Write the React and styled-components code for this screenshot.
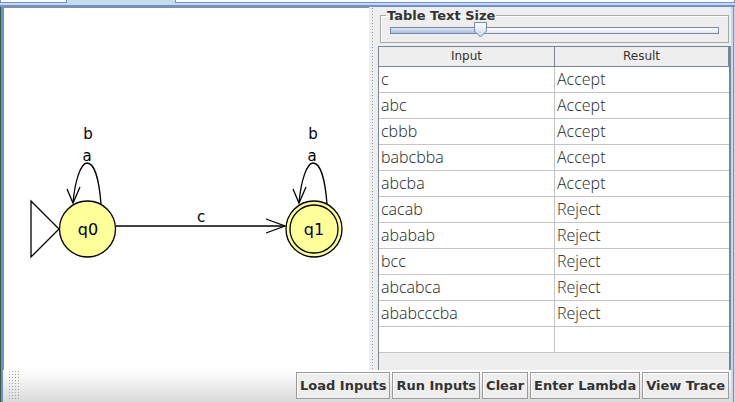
import React from "react";
import styled, { createGlobalStyle } from "styled-components";

const GlobalStyle = createGlobalStyle`
  html, body {
    margin: 0;
    padding: 0;
    background: #c6dbef;
  }
  body {
    font-family: "DejaVu Sans", sans-serif;
  }
`;

const Frame = styled.div`
  width: 735px;
  height: 402px;
  display: flex;
  flex-direction: column;
  overflow: hidden;
  background: #c6dbef;
`;

const TabStrip = styled.div`
  display: flex;
  border-bottom: 2px solid #7190cf;
  box-sizing: border-box;
  height: 7px;
`;

const Tab = styled.div`
  width: ${(p) => p.w}px;
  flex: ${(p) => (p.grow ? 1 : "none")};
  height: 3px;
  box-sizing: border-box;
  background: ${(p) => (p.active ? "#c6dbef" : "#ffffff")};
  border: ${(p) => (p.active ? "none" : "1px solid #7190cf")};
  border-top: none;
`;

const Body = styled.div`
  flex: 1;
  display: flex;
  min-height: 0;
`;

const LeftEdge = styled.div`
  width: 3px;
  background: linear-gradient(to right, #3a5a48 0 1px, #6fa060 1px 2px, #7190cf 2px 3px);
`;

const Main = styled.div`
  flex: 1;
  display: flex;
  flex-direction: column;
  background: #eeeeee;
`;

const RightEdge = styled.div`
  width: 4px;
  background: linear-gradient(to right, #c6dbef 0 2px, #7190cf 2px 3px, #c6dbef 3px);
`;

const Split = styled.div`
  height: 363px;
  display: flex;
`;

const Canvas = styled.div`
  width: 366px;
  background: #ffffff;
  border-left: 1px solid #8a8f96;
  border-top: 1px solid #8a8f96;
  box-sizing: border-box;
`;

const Divider = styled.div`
  width: 8px;
  background-color: #eeeeee;
  background-image: radial-gradient(circle, #8e9aa8 0.6px, transparent 0.9px);
  background-size: 3px 3px;
  background-position: 2px 3px;
  background-clip: content-box;
  padding: 0 2px;
  box-sizing: border-box;
`;

const Side = styled.div`
  flex: 1;
  display: flex;
  flex-direction: column;
  padding: 2px 0 0 1px;
  background: #eeeeee;
`;

const SizeBox = styled.fieldset`
  margin: 0 2px 3px 2px;
  padding: 4px 9px 6px 9px;
  border: 1px solid #a8a8a8;
  box-shadow: inset 1px 1px 0 #ffffff;
  height: 34px;
  box-sizing: border-box;
  legend {
    font: bold 13px "DejaVu Sans", sans-serif;
    color: #333333;
    padding: 0 1px;
    margin-left: -4px;
    line-height: 13px;
  }
`;

const Track = styled.div`
  position: relative;
  height: 5px;
  margin-top: 1px;
  border: 1px solid #7b8aa3;
  background: linear-gradient(#ffffff, #dfe5ee);
`;

const TrackFill = styled.div`
  height: 100%;
  background: linear-gradient(#dbe6f5, #a9bedf);
`;

const Thumb = styled.svg`
  position: absolute;
  top: -6px;
  left: 82px;
`;

const TableWrap = styled.div`
  flex: 1;
  display: flex;
  flex-direction: column;
  border-left: 1px solid #7a8694;
  border-top: 1px solid #7a8694;
  border-right: 2px solid #7a8694;
  background: #eeeeee;
`;

const Grid = styled.div`
  display: grid;
  grid-template-columns: 176px 1fr;
`;

const HeadCell = styled.div`
  height: 19px;
  font: 12px "DejaVu Sans", sans-serif;
  color: #333333;
  text-align: center;
  line-height: 19px;
  background: #eeeeee;
  border-bottom: 1px solid #7a8694;
  border-right: 1px solid #7a8694;
  &:last-child {
    border-right: none;
  }
`;

const Cell = styled.div`
  height: 25px;
  background: #ffffff;
  border-bottom: 1px solid #c4c4c4;
  border-right: ${(p) => (p.first ? "1px solid #c4c4c4" : "none")};
  font: 300 16px "Open Sans", "DejaVu Sans", sans-serif;
  color: #1e1e1e;
  line-height: 25px;
  padding-left: 2px;
  white-space: nowrap;
`;

const Toolbar = styled.div`
  flex: 1;
  display: flex;
  align-items: flex-start;
  gap: 2px;
  padding: 2px 2px 0 0;
  background: linear-gradient(#ffffff, #dadada);
`;

const Grip = styled.div`
  width: 12px;
  height: 30px;
  margin: -2px auto 0 5px;
  background-image: radial-gradient(circle, #9aa3ad 0.6px, transparent 0.9px);
  background-size: 3px 3px;
`;

const Button = styled.button`
  height: 27px;
  padding: 0 3px;
  font: bold 13px "DejaVu Sans", sans-serif;
  color: #333333;
  background: #eeeeee;
  border: 1px solid #9a9a9a;
  box-shadow: inset 1px 1px 0 #ffffff;
`;

const rows = [
  ["c", "Accept"],
  ["abc", "Accept"],
  ["cbbb", "Accept"],
  ["babcbba", "Accept"],
  ["abcba", "Accept"],
  ["cacab", "Reject"],
  ["ababab", "Reject"],
  ["bcc", "Reject"],
  ["abcabca", "Reject"],
  ["ababcccba", "Reject"],
  ["", ""],
];

const Label = ({ x, y, children, size = 15 }) => (
  <text
    x={x}
    y={y}
    fontFamily="DejaVu Sans, sans-serif"
    fontSize={size}
    textAnchor="middle"
    fill="#000"
  >
    {children}
  </text>
);

const Loop = ({ cx }) => (
  <g fill="none" stroke="#000" strokeWidth="1.3">
    <path d={`M ${cx - 14} 203 C ${cx - 12} 180, ${cx - 6} 163, ${cx} 163 C ${cx + 7} 163, ${cx + 12} 178, ${cx + 14} 204`} />
    <path d={`M ${cx - 20} 189 L ${cx - 14} 203 L ${cx - 7} 187`} />
  </g>
);

const Diagram = () => (
  <svg width="365" height="362" viewBox="4 8 365 362">
    <polygon points="31,201 59,229 31,257" fill="#fff" stroke="#000" strokeWidth="1.3" />
    <line x1="116" y1="226" x2="285" y2="226" stroke="#000" strokeWidth="1.3" />
    <path d="M 266 219 L 285 226 L 266 233" fill="none" stroke="#000" strokeWidth="1.3" />
    <Loop cx={87} />
    <Loop cx={313} />
    <circle cx="87.5" cy="229" r="28" fill="#ffff99" stroke="#000" strokeWidth="1.3" />
    <circle cx="314" cy="229" r="28" fill="#ffff99" stroke="#000" strokeWidth="1.3" />
    <circle cx="314" cy="229" r="24" fill="none" stroke="#000" strokeWidth="1.3" />
    <Label x={88} y={139}>b</Label>
    <Label x={87} y={161}>a</Label>
    <Label x={313} y={139}>b</Label>
    <Label x={312} y={161}>a</Label>
    <Label x={201} y={222}>c</Label>
    <Label x={88} y={235} size={16}>q0</Label>
    <Label x={314} y={235} size={16}>q1</Label>
  </svg>
);

const App = () => (
  <>
    <GlobalStyle />
    <Frame>
      <TabStrip>
        <Tab w={67} />
        <Tab w={108} active />
        <Tab grow />
      </TabStrip>
      <Body>
        <LeftEdge />
        <Main>
          <Split>
            <Canvas>
              <Diagram />
            </Canvas>
            <Divider />
            <Side>
              <SizeBox>
                <legend>Table Text Size</legend>
                <Track>
                  <TrackFill style={{ width: "28%" }} />
                  <Thumb width="16" height="16" viewBox="0 0 16 16">
                    <defs>
                      <linearGradient id="tg" x1="0" y1="0" x2="0" y2="1">
                        <stop offset="0" stopColor="#ffffff" />
                        <stop offset="1" stopColor="#c8d6ea" />
                      </linearGradient>
                    </defs>
                    <path d="M1.5 0.5 H13.5 V9 L7.5 15 L1.5 9 Z" fill="url(#tg)" stroke="#7b8aa3" />
                  </Thumb>
                </Track>
              </SizeBox>
              <TableWrap>
                <Grid>
                  <HeadCell>Input</HeadCell>
                  <HeadCell>Result</HeadCell>
                  {rows.map(([input, result], i) => (
                    <React.Fragment key={i}>
                      <Cell first>{input}</Cell>
                      <Cell>{result}</Cell>
                    </React.Fragment>
                  ))}
                </Grid>
              </TableWrap>
            </Side>
          </Split>
          <Toolbar>
            <Grip />
            <Button>Load Inputs</Button>
            <Button>Run Inputs</Button>
            <Button>Clear</Button>
            <Button>Enter Lambda</Button>
            <Button>View Trace</Button>
          </Toolbar>
        </Main>
        <RightEdge />
      </Body>
    </Frame>
  </>
);

export default App;
